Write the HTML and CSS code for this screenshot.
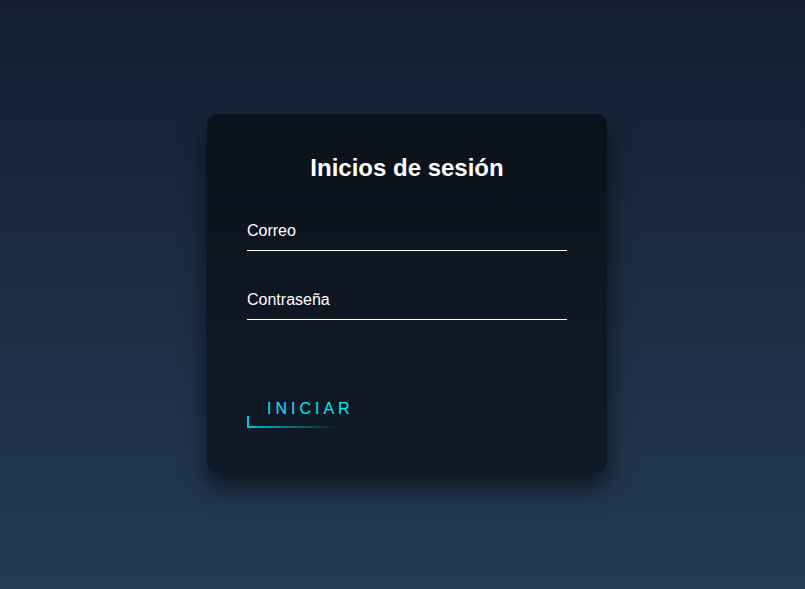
FILE: index.html
```html
<!DOCTYPE html>
<html lang="es">
<head>
<meta charset="utf-8">
<title>Inicios de sesión</title>
<link rel="stylesheet" href="styles.css">
</head>
<body>
<div class="page">
  <div class="login-box">
    <h2 class="title">Inicios de sesión</h2>
    <form class="form">
      <div class="user-box">
        <input type="text" class="field" required>
        <label class="label">Correo</label>
      </div>
      <div class="user-box">
        <input type="password" class="field" required>
        <label class="label">Contraseña</label>
      </div>
      <a href="#" class="btn">
        <span class="edge edge-left"></span>
        <span class="edge edge-bottom"></span>
        INICIAR
      </a>
    </form>
  </div>
</div>
</body>
</html>
```
FILE: styles.css
```css
html, body {
  margin: 0;
  padding: 0;
  height: 100%;
}
body {
  font-family: "Liberation Sans", Arial, sans-serif;
  background: linear-gradient(#141e30, #243b55);
}
.page {
  min-height: 100vh;
  display: flex;
  align-items: center;
  justify-content: center;
  padding-left: 9px;
  padding-bottom: 4px;
  box-sizing: border-box;
}
.login-box {
  width: 400px;
  padding: 40px;
  box-sizing: border-box;
  background: rgba(0, 0, 0, 0.5);
  box-shadow: 0 15px 25px rgba(0, 0, 0, 0.6);
  border-radius: 10px;
}
.title {
  margin: 0 0 30px;
  padding: 0;
  color: #fff;
  text-align: center;
  font-size: 24px;
}
.user-box {
  position: relative;
}
.field {
  display: block;
  width: 100%;
  box-sizing: border-box;
  padding: 10px 0;
  font-size: 16px;
  font-family: inherit;
  color: #fff;
  margin-bottom: 30px;
  border: none;
  border-bottom: 1px solid #fff;
  outline: none;
  background: transparent;
}
.label {
  position: absolute;
  top: 0;
  left: 0;
  padding: 10px 0;
  font-size: 16px;
  color: #fff;
  pointer-events: none;
}
.btn {
  position: relative;
  display: inline-block;
  padding: 10px 20px;
  color: #03e9f4;
  font-size: 16px;
  text-decoration: none;
  overflow: hidden;
  margin-top: 40px;
  letter-spacing: 4px;
}
.edge {
  position: absolute;
  display: block;
}
.edge-left {
  left: 0;
  bottom: 0;
  width: 2px;
  height: 12px;
  background: #03c8d4;
}
.edge-bottom {
  left: 0;
  bottom: 0;
  width: 90px;
  height: 2px;
  background: linear-gradient(90deg, #03c8d4, rgba(3, 233, 244, 0));
}
```
